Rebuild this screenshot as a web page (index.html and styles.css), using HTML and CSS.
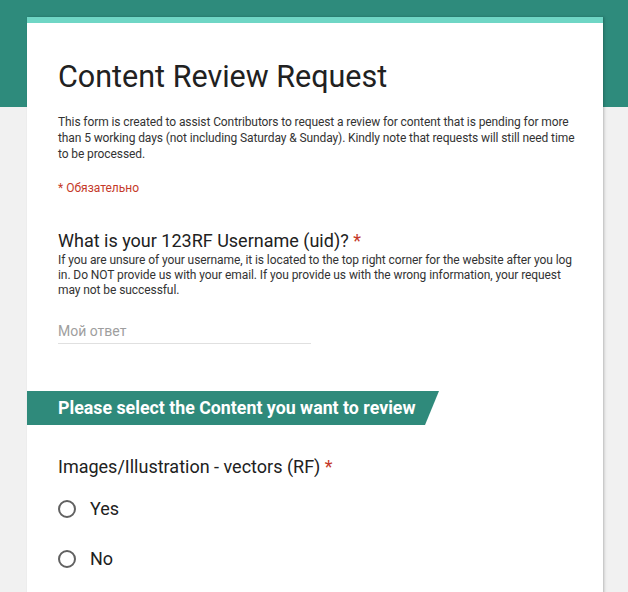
FILE: index.html
```html
<!DOCTYPE html>
<html lang="en">
<head>
<meta charset="utf-8">
<title>Content Review Request</title>
<link rel="stylesheet" href="styles.css">
</head>
<body>
<div class="page">
  <div class="card">
    <h1 class="title">Content Review Request</h1>
    <p class="desc">This form is created to assist Contributors to request a review for content that is pending for more than 5 working days (not including Saturday &amp; Sunday). Kindly note that requests will still need time to be processed.</p>
    <p class="required">* Обязательно</p>

    <div class="question">
      <div class="q-title">What is your 123RF Username (uid)? <span class="star">*</span></div>
      <div class="q-help">If you are unsure of your username, it is located to the top right corner for the website after you log in. Do NOT provide us with your email. If you provide us with the wrong information, your request may not be successful.</div>
      <div class="answer">Мой ответ</div>
    </div>

    <div class="section">Please select the Content you want to review</div>

    <div class="question q2">
      <div class="q-title">Images/Illustration - vectors (RF) <span class="star">*</span></div>
      <div class="options">
        <div class="option"><span class="radio"></span><span class="opt-label">Yes</span></div>
        <div class="option"><span class="radio"></span><span class="opt-label">No</span></div>
      </div>
    </div>
  </div>
</div>
</body>
</html>
```

FILE: styles.css
```css
html, body {
  margin: 0;
  padding: 0;
}
body {
  background: linear-gradient(to bottom, #2e8b7c 0, #2e8b7c 107px, #f1f1f1 107px);
  font-family: Roboto, "Noto Sans", "Liberation Sans", sans-serif;
  color: #212121;
  min-height: 592px;
  overflow: hidden;
}
.page {
  padding-top: 17px;
  padding-left: 27px;
}
.card {
  width: 576px;
  box-sizing: border-box;
  background: #fff;
  border-top: 6px solid #6fd6c5;
  padding: 36px 24px 60px 31px;
  box-shadow: 1px 0 2px rgba(0,0,0,0.18), 2px 0 4px rgba(0,0,0,0.06);
  min-height: 620px;
}
.title {
  margin: 0;
  font-size: 30.5px;
  line-height: 36px;
  font-weight: 400;
  color: #212121;
}
.desc {
  margin: 19px 0 0 0;
  font-size: 12px;
  line-height: 16px;
  letter-spacing: -0.1px;
  color: #333;
}
.required {
  margin: 18px 0 0 0;
  font-size: 12px;
  line-height: 16px;
  color: #c53929;
}
.question {
  margin-top: 33px;
}
.q-title {
  font-size: 18px;
  line-height: 24px;
  color: #212121;
}
.star {
  color: #c53929;
}
.q-help {
  font-size: 12px;
  line-height: 15px;
  letter-spacing: -0.08px;
  color: #333;
}
.answer {
  margin-top: 23px;
  width: 253px;
  font-size: 14px;
  line-height: 20px;
  color: #9e9e9e;
  padding-bottom: 2px;
  border-bottom: 1px solid #e0e0e0;
}
.section {
  margin: 47px 0 0 -31px;
  width: 412px;
  height: 34px;
  box-sizing: border-box;
  padding-left: 31px;
  background: #2f8a7b;
  color: #fff;
  font-weight: 700;
  font-size: 17.8px;
  line-height: 34px;
  clip-path: polygon(0 0, 100% 0, calc(100% - 14px) 100%, 0 100%);
}
.q2 {
  margin-top: 30px;
}
.options {
  margin-top: 18px;
  display: flex;
  flex-direction: column;
  gap: 26px;
}
.option {
  display: flex;
  align-items: center;
  gap: 14px;
  height: 24px;
}
.radio {
  width: 18px;
  height: 18px;
  box-sizing: border-box;
  border: 2px solid #616161;
  border-radius: 50%;
  flex: none;
}
.opt-label {
  font-size: 18px;
  line-height: 24px;
  color: #212121;
}
```
